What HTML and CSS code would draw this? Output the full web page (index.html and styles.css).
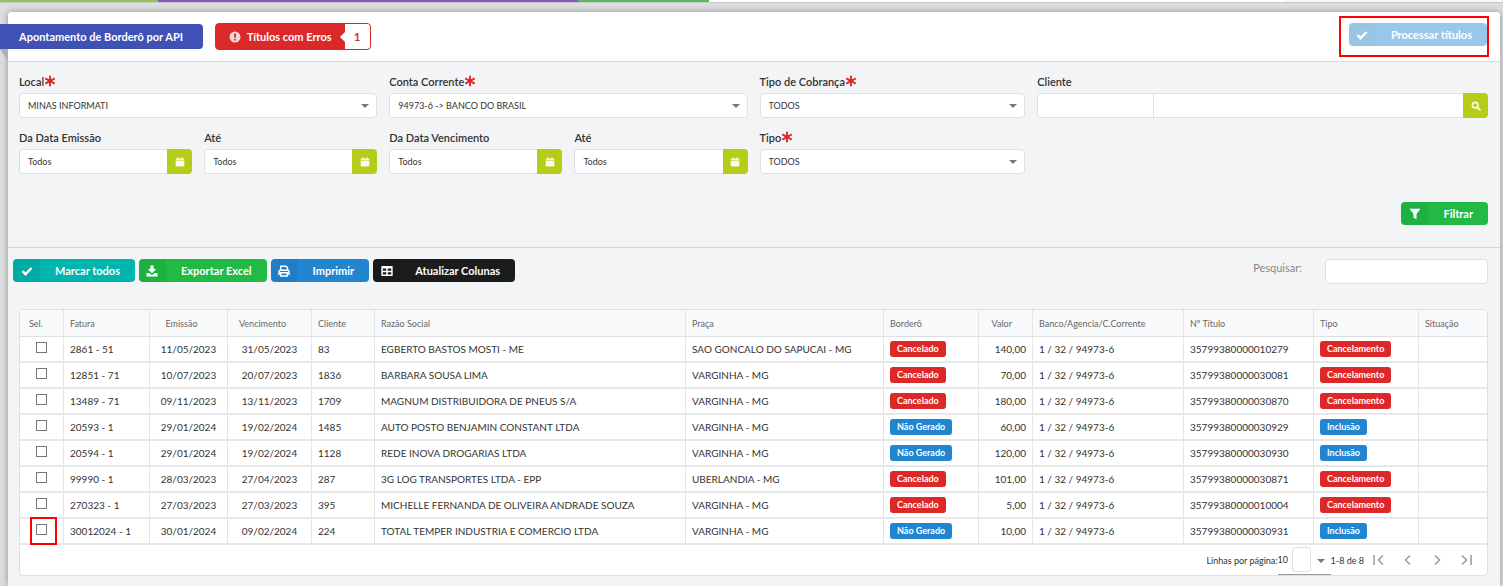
FILE: index.html
```html
<!DOCTYPE html>
<html lang="pt-BR">
<head>
    <meta charset="UTF-8">
    <meta name="viewport" content="width=device-width, initial-scale=1.0">
    <title>Apontamento de Borderô por API</title>
    <link rel="stylesheet" href="styles.css">
</head>
<body>
    <!-- icons used by the buttons -->
    <svg class="sprite" aria-hidden="true">
        <symbol id="check" viewBox="0 0 12 12"><path d="M1.5 6.2 4.5 9.2 10.6 3" fill="none" stroke="currentColor" stroke-width="2.4"/></symbol>
        <symbol id="download" viewBox="0 0 12 12"><path d="M4.4 0.5h3.2v3.5h2.6L6 8.200 1.800 4h2.600zM0.5 8h2.900L6 10.300 8.600 8h2.900v3.500h-11z" fill="currentColor"/></symbol>
        <symbol id="print" viewBox="0 0 12 12"><path d="M2.700 5V1.200h5.300l1.500 1.500V5M2.700 9H1V6.500Q1 5.300 2.200 5.300h7.600Q11 5.300 11 6.500V9H9.300M2.700 7.800h6.600v3.200H2.700z" fill="none" stroke="currentColor" stroke-width="1.500"/></symbol>
        <symbol id="table" viewBox="0 0 12 12"><path d="M1 1h10q.7 0 .7.700v8.600q0 .7-.7.700H1q-.7 0-.7-.7V1.700q0-.7.7-.7zM1.800 3.500v2.300h3.400V3.500zm5 0v2.300h3.400V3.500zm-5 3.700v2.300h3.400V7.200zm5 0v2.300h3.400V7.200z" fill="currentColor" fill-rule="evenodd"/></symbol>
        <symbol id="filter" viewBox="0 0 12 12"><path d="M.5.700h11L7.500 6v5.500L4.500 9.400V6z" fill="currentColor"/></symbol>
        <symbol id="calendar" viewBox="0 0 12 12"><path d="M.8 4V2.900q0-1 1-1h1V.5h1.800v1.400h2.800V.5h1.800v1.400h1q1 0 1 1V4zM.8 4.500h10.400v6q0 1-1 1H1.800q-1 0-1-1z" fill="currentColor"/></symbol>
        <symbol id="search" viewBox="0 0 12 12"><circle cx="5" cy="5" r="3.300" fill="none" stroke="currentColor" stroke-width="2"/><path d="M7.500 7.500l3.200 3.200" stroke="currentColor" stroke-width="2.200" stroke-linecap="round"/></symbol>
        <symbol id="alert" viewBox="0 0 12 12"><path d="M6 .5a5.500 5.500 0 1 0 0 11 5.500 5.500 0 1 0 0-11zM5 2.800h2L6.700 7H5.300zM5.100 7.900h1.800v1.600H5.100z" fill="currentColor" fill-rule="evenodd"/></symbol>
        <symbol id="star" viewBox="0 0 12 12"><path d="M6 .8v10.400M1.300 3.400l9.400 5.200M10.700 3.400l-9.400 5.200" stroke="currentColor" stroke-width="1.900"/></symbol>
        <symbol id="first" viewBox="0 0 16 16"><path d="M3 3v10M12 3.500 7.500 8l4.500 4.500" fill="none" stroke="currentColor" stroke-width="1.500"/></symbol>
        <symbol id="prev" viewBox="0 0 16 16"><path d="M10 3.500 5.500 8l4.500 4.500" fill="none" stroke="currentColor" stroke-width="1.500"/></symbol>
        <symbol id="next" viewBox="0 0 16 16"><path d="M6 3.500 10.500 8 6 12.500" fill="none" stroke="currentColor" stroke-width="1.500"/></symbol>
        <symbol id="last" viewBox="0 0 16 16"><path d="M13 3v10M4 3.500 8.500 8 4 12.500" fill="none" stroke="currentColor" stroke-width="1.500"/></symbol>
    </svg>

    <div class="topbar">
        <span class="tab tab-green"></span>
        <span class="tab tab-purple"></span>
        <span class="tab tab-leaf"></span>
        <span class="tab tab-rest"></span>
        <span class="tab tab-menu"></span>
    </div>

    <main class="panel">
        <header class="panel-header">
            <h1 class="ribbon">Apontamento de Borderô por API</h1>
            <button type="button" class="errors">
                <span class="errors-text"><svg class="icon"><use href="#alert"/></svg>Títulos com Erros</span>
                <span class="errors-count">1</span>
            </button>
            <div class="highlight process">
                <button type="button" class="btn blue" disabled><span class="btn-icon"><svg class="icon"><use href="#check"/></svg></span><span class="btn-text">Processar títulos</span></button>
            </div>
        </header>

        <form class="filters">
            <div class="fields">
                <div class="field w4">
                    <label for="local">Local<svg class="required"><use href="#star"/></svg></label>
                    <div class="select"><select id="local"><option>MINAS INFORMATI</option></select></div>
                </div>
                <div class="field w4">
                    <label for="conta">Conta Corrente<svg class="required"><use href="#star"/></svg></label>
                    <div class="select"><select id="conta"><option>94973-6 -&gt; BANCO DO BRASIL</option></select></div>
                </div>
                <div class="field w3">
                    <label for="cobranca">Tipo de Cobrança<svg class="required"><use href="#star"/></svg></label>
                    <div class="select"><select id="cobranca"><option>TODOS</option></select></div>
                </div>
                <div class="field w5">
                    <label for="cliente">Cliente</label>
                    <div class="group">
                        <input type="text" id="cliente" class="code">
                        <input type="text" class="name" aria-label="Nome do cliente">
                        <button type="button" class="addon" aria-label="Buscar cliente"><svg class="icon"><use href="#search"/></svg></button>
                    </div>
                </div>
                <div class="field w2">
                    <label for="emissao1">Da Data Emissão</label>
                    <div class="group"><input type="text" id="emissao1" value="Todos"><button type="button" class="addon" aria-label="Calendário"><svg class="icon"><use href="#calendar"/></svg></button></div>
                </div>
                <div class="field w2">
                    <label for="emissao2">Até</label>
                    <div class="group"><input type="text" id="emissao2" value="Todos"><button type="button" class="addon" aria-label="Calendário"><svg class="icon"><use href="#calendar"/></svg></button></div>
                </div>
                <div class="field w2">
                    <label for="venc1">Da Data Vencimento</label>
                    <div class="group"><input type="text" id="venc1" value="Todos"><button type="button" class="addon" aria-label="Calendário"><svg class="icon"><use href="#calendar"/></svg></button></div>
                </div>
                <div class="field w2">
                    <label for="venc2">Até</label>
                    <div class="group"><input type="text" id="venc2" value="Todos"><button type="button" class="addon" aria-label="Calendário"><svg class="icon"><use href="#calendar"/></svg></button></div>
                </div>
                <div class="field w3">
                    <label for="tipo">Tipo<svg class="required"><use href="#star"/></svg></label>
                    <div class="select"><select id="tipo"><option>TODOS</option></select></div>
                </div>
            </div>
            <div class="filter-action">
                <button type="button" class="btn green"><span class="btn-icon"><svg class="icon"><use href="#filter"/></svg></span><span class="btn-text">Filtrar</span></button>
            </div>
        </form>

        <div class="toolbar">
            <button type="button" class="btn teal"><span class="btn-icon"><svg class="icon"><use href="#check"/></svg></span><span class="btn-text">Marcar todos</span></button>
            <button type="button" class="btn green"><span class="btn-icon"><svg class="icon"><use href="#download"/></svg></span><span class="btn-text">Exportar Excel</span></button>
            <button type="button" class="btn blue"><span class="btn-icon"><svg class="icon"><use href="#print"/></svg></span><span class="btn-text">Imprimir</span></button>
            <button type="button" class="btn black"><span class="btn-icon"><svg class="icon"><use href="#table"/></svg></span><span class="btn-text">Atualizar Colunas</span></button>
            <label for="pesquisar" class="search-label">Pesquisar:</label>
            <input type="text" id="pesquisar" class="search">
        </div>

        <div class="grid">
            <table>
                <colgroup>
                    <col class="c-sel"><col class="c-fatura"><col class="c-emissao"><col class="c-venc"><col class="c-cliente"><col class="c-razao"><col class="c-praca"><col class="c-bordero"><col class="c-valor"><col class="c-banco"><col class="c-titulo"><col class="c-tipo"><col>
                </colgroup>
                <thead>
                    <tr>
                        <th class="sel">Sel.</th><th>Fatura</th><th class="date">Emissão</th><th class="date">Vencimento</th><th>Cliente</th><th>Razão Social</th><th>Praça</th><th>Borderô</th><th class="value">Valor</th><th>Banco/Agencia/C.Corrente</th><th>Nº Título</th><th>Tipo</th><th>Situação</th>
                    </tr>
                </thead>
                <tbody>
                    <tr><td class="sel"><input type="checkbox" aria-label="Selecionar 2861 - 51"></td><td>2861 - 51</td><td class="date">11/05/2023</td><td class="date">31/05/2023</td><td>83</td><td>EGBERTO BASTOS MOSTI - ME</td><td>SAO GONCALO DO SAPUCAI - MG</td><td><span class="tag red">Cancelado</span></td><td class="value">140,00</td><td>1 / 32 / 94973-6</td><td>35799380000010279</td><td><span class="tag red">Cancelamento</span></td><td></td></tr>
                    <tr><td class="sel"><input type="checkbox" aria-label="Selecionar 12851 - 71"></td><td>12851 - 71</td><td class="date">10/07/2023</td><td class="date">20/07/2023</td><td>1836</td><td>BARBARA SOUSA LIMA</td><td>VARGINHA - MG</td><td><span class="tag red">Cancelado</span></td><td class="value">70,00</td><td>1 / 32 / 94973-6</td><td>35799380000030081</td><td><span class="tag red">Cancelamento</span></td><td></td></tr>
                    <tr><td class="sel"><input type="checkbox" aria-label="Selecionar 13489 - 71"></td><td>13489 - 71</td><td class="date">09/11/2023</td><td class="date">13/11/2023</td><td>1709</td><td>MAGNUM DISTRIBUIDORA DE PNEUS S/A</td><td>VARGINHA - MG</td><td><span class="tag red">Cancelado</span></td><td class="value">180,00</td><td>1 / 32 / 94973-6</td><td>35799380000030870</td><td><span class="tag red">Cancelamento</span></td><td></td></tr>
                    <tr><td class="sel"><input type="checkbox" aria-label="Selecionar 20593 - 1"></td><td>20593 - 1</td><td class="date">29/01/2024</td><td class="date">19/02/2024</td><td>1485</td><td>AUTO POSTO BENJAMIN CONSTANT LTDA</td><td>VARGINHA - MG</td><td><span class="tag info">Não Gerado</span></td><td class="value">60,00</td><td>1 / 32 / 94973-6</td><td>35799380000030929</td><td><span class="tag info">Inclusão</span></td><td></td></tr>
                    <tr><td class="sel"><input type="checkbox" aria-label="Selecionar 20594 - 1"></td><td>20594 - 1</td><td class="date">29/01/2024</td><td class="date">19/02/2024</td><td>1128</td><td>REDE INOVA DROGARIAS LTDA</td><td>VARGINHA - MG</td><td><span class="tag info">Não Gerado</span></td><td class="value">120,00</td><td>1 / 32 / 94973-6</td><td>35799380000030930</td><td><span class="tag info">Inclusão</span></td><td></td></tr>
                    <tr><td class="sel"><input type="checkbox" aria-label="Selecionar 99990 - 1"></td><td>99990 - 1</td><td class="date">28/03/2023</td><td class="date">27/04/2023</td><td>287</td><td>3G LOG TRANSPORTES LTDA - EPP</td><td>UBERLANDIA - MG</td><td><span class="tag red">Cancelado</span></td><td class="value">101,00</td><td>1 / 32 / 94973-6</td><td>35799380000030871</td><td><span class="tag red">Cancelamento</span></td><td></td></tr>
                    <tr><td class="sel"><input type="checkbox" aria-label="Selecionar 270323 - 1"></td><td>270323 - 1</td><td class="date">27/03/2023</td><td class="date">27/03/2023</td><td>395</td><td>MICHELLE FERNANDA DE OLIVEIRA ANDRADE SOUZA</td><td>VARGINHA - MG</td><td><span class="tag red">Cancelado</span></td><td class="value">5,00</td><td>1 / 32 / 94973-6</td><td>35799380000010004</td><td><span class="tag red">Cancelamento</span></td><td></td></tr>
                    <tr><td class="sel"><span class="highlight pick"></span><input type="checkbox" aria-label="Selecionar 30012024 - 1"></td><td>30012024 - 1</td><td class="date">30/01/2024</td><td class="date">09/02/2024</td><td>224</td><td>TOTAL TEMPER INDUSTRIA E COMERCIO LTDA</td><td>VARGINHA - MG</td><td><span class="tag info">Não Gerado</span></td><td class="value">10,00</td><td>1 / 32 / 94973-6</td><td>35799380000030931</td><td><span class="tag info">Inclusão</span></td><td></td></tr>
                </tbody>
            </table>
            <div class="pager">
                <label for="linhas">Linhas por página:</label>
                <div class="page-size">
                    <select id="linhas"><option>10</option></select>
                    <input type="text" aria-label="Linhas">
                </div>
                <span class="range">1-8 de 8</span>
                <button type="button" aria-label="Primeira"><svg><use href="#first"/></svg></button>
                <button type="button" aria-label="Anterior"><svg><use href="#prev"/></svg></button>
                <button type="button" aria-label="Próxima"><svg><use href="#next"/></svg></button>
                <button type="button" aria-label="Última"><svg><use href="#last"/></svg></button>
            </div>
        </div>
    </main>
</body>
</html>
```
FILE: styles.css
```css
* {
    box-sizing: border-box;
}
body {
    font-family: Lato, sans-serif;
    font-size: 10px;
    margin: 0;
    min-height: 100vh;
    display: flex;
    flex-direction: column;
    background-color: #dcdddf;
    color: #333;
}
button, input, select {
    font-family: inherit;
    font-size: inherit;
    color: inherit;
    margin: 0;
}
button {
    border: none;
    padding: 0;
    cursor: pointer;
}
.sprite {
    position: absolute;
    width: 0;
    height: 0;
}
.icon {
    width: 12px;
    height: 12px;
}

/* bottom edge of the menu tabs */
.topbar {
    display: flex;
    height: 3px;
    border-bottom: 1px solid #c8c8ca;
}
.tab-green {
    flex: 158;
    background: #94c356;
}
.tab-purple {
    flex: 420;
    background: #8659bd;
}
.tab-leaf {
    flex: 131;
    background: #5cb860;
}
.tab-rest {
    flex: 575;
    background: #fff;
}
.tab-menu {
    flex: 219;
    background: #f7f7f7;
}

.panel {
    flex: 1;
    margin: 9px 3px 0 8px;
    background: #f2f4f6;
    border-radius: 4px 4px 0 0;
    box-shadow: 0 0 6px rgba(0,0,0,0.35);
}
.panel-header {
    display: flex;
    align-items: center;
    gap: 12px;
    height: 50px;
    padding-right: 11px;
    background: #fff;
    border-bottom: 1px solid #d9dadc;
    border-radius: 4px 4px 0 0;
}
.ribbon {
    position: relative;
    margin: 0 0 0 -8px;
    padding: 0 20px 0 19px;
    background: #3f51b5;
    color: #fff;
    font-size: 11px;
    line-height: 25px;
    border-radius: 0 4px 4px 0;
}
.ribbon::after {
    content: "";
    position: absolute;
    left: 0;
    top: 100%;
    border-top: 12px solid #aeafb1;
    border-left: 8px solid transparent;
}
.errors {
    display: flex;
    background: #db2828;
    border-radius: 4px;
    color: #fff;
    font-size: 11px;
    font-weight: bold;
    line-height: 25px;
    border: 1px solid #db2828;
}
.errors-text {
    display: flex;
    align-items: center;
    gap: 6px;
    padding: 0 13px;
}
.errors-text .icon {
    opacity: 0.8;
}
.errors-count {
    position: relative;
    width: 25px;
    background: #fff;
    color: #db2828;
    border-radius: 0 3px 3px 0;
}
.errors-count::before {
    content: "";
    position: absolute;
    left: -5px;
    top: 8px;
    border: 5px solid transparent;
    border-left: none;
    border-right-color: #fff;
}
.highlight {
    border: 2px solid #f00;
}
.process {
    margin-left: auto;
    height: 41px;
    padding: 5px 0 0 8px;
}

.btn {
    display: flex;
    height: 23px;
    border-radius: 4px;
    color: #fff;
    font-size: 11px;
    font-weight: bold;
    line-height: 23px;
    overflow: hidden;
    white-space: nowrap;
}
.btn-icon {
    display: flex;
    align-items: center;
    justify-content: center;
    width: 27px;
    height: 23px;
    background: rgba(0,0,0,0.05);
}
.btn-text {
    padding: 0 15px;
}
.btn:disabled {
    opacity: 0.45;
}
.blue {
    background: #2185d0;
}
.green {
    background: #21ba45;
}
.teal {
    background: #00b5ad;
}
.black {
    background: #1b1c1d;
}

.filters {
    padding: 12px 12px 22px 11px;
    border-bottom: 1px solid #d4d5d7;
}
.fields {
    display: grid;
    grid-template-columns: repeat(16, 1fr);
    gap: 12px;
}
.w2 {
    grid-column: span 2;
}
.w3 {
    grid-column: span 3;
}
.w4 {
    grid-column: span 4;
}
.w5 {
    grid-column: span 5;
}
.field label {
    display: flex;
    align-items: center;
    height: 14px;
    margin-bottom: 5px;
    font-size: 11px;
    font-weight: 600;
}
.required {
    width: 12px;
    height: 12px;
    color: #db2828;
}
.select {
    position: relative;
}
.select::after {
    content: "";
    position: absolute;
    right: 8px;
    top: 11px;
    border: 4px solid transparent;
    border-top-color: #777;
    border-bottom: none;
}
.select select, .group input, .search {
    width: 100%;
    min-width: 0;
    height: 25px;
    padding: 0 8px;
    border: 1px solid #dfe0e1;
    border-radius: 4px;
    background: #fff;
    font-size: 9px;
    appearance: none;
}
.group {
    display: flex;
}
.group input {
    border-radius: 4px 0 0 4px;
    border-right: none;
}
.group .code {
    width: 116px;
}
.group .name {
    flex: 1;
    border-radius: 0;
    border-left: 1px solid #dfe0e1;
}
.addon {
    display: flex;
    align-items: center;
    justify-content: center;
    flex: 0 0 25px;
    height: 25px;
    background: #b5cc18;
    color: #fff;
    border-radius: 0 4px 4px 0;
}
.addon .icon {
    width: 10px;
    height: 10px;
    opacity: 0.9;
}
.filter-action {
    display: flex;
    justify-content: flex-end;
    margin-top: 28px;
}

.toolbar {
    display: flex;
    gap: 4px;
    padding: 11px 12px 25px 5px;
}
.search-label {
    margin-left: auto;
    margin-right: 19px;
    font-size: 11px;
    line-height: 18px;
    color: #888;
}
.toolbar .search {
    width: 163px;
}

.grid {
    margin: 0 12px 0 11px;
    background: #fff;
    border: 1px solid #dfe0e1;
    border-radius: 4px;
}
table {
    width: 100%;
    table-layout: fixed;
    border-collapse: separate;
    border-spacing: 0;
}
.c-sel {
    width: 44px;
}
.c-fatura {
    width: 86px;
}
.c-emissao {
    width: 78px;
}
.c-venc {
    width: 84px;
}
.c-cliente {
    width: 63px;
}
.c-razao {
    width: 311px;
}
.c-praca {
    width: 198px;
}
.c-bordero {
    width: 95px;
}
.c-valor {
    width: 54px;
}
.c-banco {
    width: 151px;
}
.c-titulo {
    width: 130px;
}
.c-tipo {
    width: 105px;
}
th, td {
    padding: 0 6px;
    text-align: left;
    white-space: nowrap;
    border-right: 1px solid #e4e5e6;
    border-bottom: 1px solid #dfe0e1;
}
th:last-child, td:last-child {
    border-right: none;
}
th {
    height: 27px;
    background: #f9fafb;
    color: #666;
    font-size: 9px;
    font-weight: normal;
}
td {
    height: 26px;
    border-bottom: 2px solid #e8e8e8;
}
th.sel {
    padding-left: 9px;
}
td.sel {
    position: relative;
    text-align: center;
}
.sel input {
    display: block;
    width: 11px;
    height: 11px;
    margin: 0 auto 3px;
    border: 1px solid #777;
    background: #fff;
    appearance: none;
}
.pick {
    position: absolute;
    left: 10px;
    top: -2px;
    width: 27px;
    height: 28px;
}
.date {
    text-align: center;
}
th.date {
    padding-right: 20px;
}
.value {
    text-align: right;
}
th.value {
    padding-right: 20px;
}
.tag {
    display: inline-block;
    padding: 0 7px;
    border-radius: 3px;
    color: #fff;
    font-size: 9px;
    font-weight: bold;
    line-height: 16px;
}
.red {
    background: #db2828;
}
.info {
    background: #2185d0;
}

.pager {
    display: flex;
    align-items: center;
    justify-content: flex-end;
    height: 30px;
    padding-right: 7px;
    font-size: 9px;
}
.page-size {
    position: relative;
    display: flex;
    align-items: center;
    width: 53px;
    height: 30px;
    border-bottom: 1px solid #999;
}
.page-size::after {
    content: "";
    position: absolute;
    right: 6px;
    top: 14px;
    border: 4px solid transparent;
    border-top-color: #777;
    border-bottom: none;
}
.page-size select {
    width: 14px;
    padding: 0;
    border: none;
    background: none;
    appearance: none;
}
.page-size input {
    width: 19px;
    height: 25px;
    border: 1px solid #dfe0e1;
    border-radius: 3px;
}
.pager button {
    width: 29px;
    height: 16px;
    background: none;
    color: #999;
}
.pager svg {
    width: 16px;
    height: 16px;
}
```
